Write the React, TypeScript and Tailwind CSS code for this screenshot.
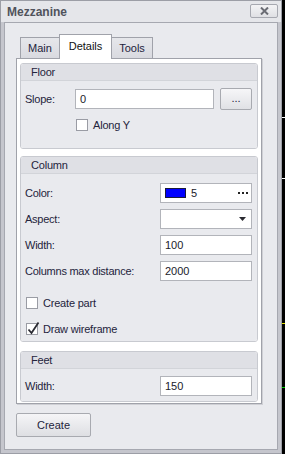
import React from "react";

const font = { fontFamily: '"Liberation Sans", Arial, sans-serif' };

function Checkbox({ checked }: { checked?: boolean }) {
  return (
    <div className="relative w-[12px] h-[12px] border border-[#9a9ca4] bg-white shrink-0">
      {checked && (
        <svg className="absolute left-[0px] top-[-3px]" width="13" height="14" viewBox="0 0 13 14">
          <path d="M1.5 8.5 L4.5 12 L11.5 1.5" fill="none" stroke="#2b2b33" strokeWidth="1.8" />
        </svg>
      )}
    </div>
  );
}

function Group({ title, children, className = "" }: { title: string; children: React.ReactNode; className?: string }) {
  return (
    <div className={"border border-[#c8cad0] rounded-[3px] overflow-hidden " + className}>
      <div className="h-[17px] bg-[#dfe0e5] border-b border-[#d2d4d9] flex items-center pl-[10px] text-[11px] text-[#24243c] tracking-[-0.2px]">
        {title}
      </div>
      <div className="bg-[#e9eaee]">{children}</div>
    </div>
  );
}

function Field({ label, value, children }: { label: string; value?: string; children?: React.ReactNode }) {
  return (
    <div className="flex items-center justify-between h-[20px]">
      <span className="text-[11px] text-[#24243c] tracking-[-0.25px]">{label}</span>
      <div className="w-[92px] h-[20px] bg-white border border-[#b2b4ba] flex items-center pl-[4px] text-[11px] text-[#1a1a2a]">
        {children ?? value}
      </div>
    </div>
  );
}

export default function App() {
  return (
    <div className="w-[285px] h-[454px] bg-black flex" style={font}>
      <div className="w-[282px] h-[454px] border border-[#9c9ea6] bg-[#e5e6ea] flex flex-col">
        {/* Title bar */}
        <div className="h-[21px] flex items-center justify-between pl-[6px] pr-[3px] shrink-0">
          <span className="text-[12px] font-bold text-[#50535c]">Mezzanine</span>
          <div className="w-[28px] h-[14px] mb-[2px] border border-[#a6a8b0] rounded-[2px] bg-gradient-to-b from-[#f3f3f5] to-[#dfe0e4] flex items-center justify-center">
            <svg width="9" height="8" viewBox="0 0 9 8">
              <path d="M1 0.5 L8 7.5 M8 0.5 L1 7.5" stroke="#6a6c74" strokeWidth="2" />
            </svg>
          </div>
        </div>
        {/* Body frame */}
        <div className="flex-1 bg-[#c5c6cd] px-[3px] pb-[3px] flex">
          <div className="flex-1 border border-[#a6a8b0] bg-[#e9eaee] flex flex-col pl-[11px] pt-[11px]">
            {/* Tabs */}
            <div className="flex items-end h-[24px] ml-[4px] text-[11px] text-[#24243c]">
              <div className="w-[40px] h-[21px] border border-b-0 border-[#a0a2aa] bg-gradient-to-b from-[#e6e7eb] to-[#d9dae0] flex items-center justify-center">
                Main
              </div>
              <div className="w-[53px] h-[25px] -ml-px -mb-px border border-b-0 border-[#a0a2aa] bg-white relative z-10 flex items-center justify-center pb-[2px] text-[#111]">
                Details
              </div>
              <div className="w-[42px] h-[21px] -ml-px border border-b-0 border-[#a0a2aa] bg-gradient-to-b from-[#e6e7eb] to-[#d9dae0] flex items-center justify-center">
                Tools
              </div>
            </div>
            {/* Tab panel */}
            <div className="w-[246px] border border-[#a0a2aa] bg-white shadow-[1px_1px_0_#cfd0d5] px-[3px] pt-[4px] pb-[1px] flex flex-col">
              <Group title="Floor">
                <div className="px-[4px] pt-[7px] pb-[17px] flex flex-col">
                  <div className="flex items-center h-[22px]">
                    <span className="w-[50px] text-[11px] text-[#24243c] tracking-[-0.25px]">Slope:</span>
                    <div className="w-[139px] h-[20px] bg-white border border-[#b2b4ba] flex items-center pl-[4px] text-[11px] text-[#1a1a2a]">
                      0
                    </div>
                    <div className="ml-[6px] w-[32px] h-[22px] border border-[#a8aab0] rounded-[2px] bg-gradient-to-b from-[#f6f6f8] to-[#e0e1e5] flex items-center justify-center text-[11px] text-[#24243c] pb-[2px]">
                      ...
                    </div>
                  </div>
                  <div className="flex items-center h-[12px] mt-[9px] pl-[51px] gap-[5px]">
                    <Checkbox />
                    <span className="text-[11px] text-[#24243c] tracking-[-0.2px]">Along Y</span>
                  </div>
                </div>
              </Group>
              <Group title="Column" className="mt-[7px]">
                <div className="pl-[4px] pr-[5px] pt-[9px] pb-[6px] flex flex-col">
                  <div className="flex flex-col gap-[6px]">
                    <Field label="Color:">
                      <div className="flex items-center w-full pr-[3px]">
                        <div className="w-[21px] h-[10px] bg-[#0000ff] border border-[#1a1a3a]" />
                        <span className="ml-[5px]">5</span>
                        <div className="ml-auto flex gap-[2px]">
                          <div className="w-[2px] h-[2px] bg-[#222]" />
                          <div className="w-[2px] h-[2px] bg-[#222]" />
                          <div className="w-[2px] h-[2px] bg-[#222]" />
                        </div>
                      </div>
                    </Field>
                    <Field label="Aspect:">
                      <div className="flex items-center justify-end w-full pr-[5px]">
                        <svg width="7" height="4" viewBox="0 0 7 4">
                          <path d="M0 0 H7 L3.5 4 Z" fill="#2a2a30" />
                        </svg>
                      </div>
                    </Field>
                    <Field label="Width:" value="100" />
                    <Field label="Columns max distance:" value="2000" />
                  </div>
                  <div className="flex items-center h-[12px] mt-[16px] pl-[1px] gap-[5px]">
                    <Checkbox />
                    <span className="text-[11px] text-[#24243c] tracking-[-0.2px]">Create part</span>
                  </div>
                  <div className="flex items-center h-[12px] mt-[14px] pl-[1px] gap-[5px]">
                    <Checkbox checked />
                    <span className="text-[11px] text-[#24243c] tracking-[-0.2px]">Draw wireframe</span>
                  </div>
                </div>
              </Group>
              <Group title="Feet" className="mt-[9px]">
                <div className="pl-[4px] pr-[5px] pt-[7px] pb-[5px]">
                  <Field label="Width:" value="150" />
                </div>
              </Group>
            </div>
            {/* Create button */}
            <div className="mt-[9px] w-[75px] h-[24px] border border-[#a8aab0] rounded-[2px] bg-gradient-to-b from-[#f5f5f7] to-[#dedfe3] flex items-center justify-center text-[11px] text-[#24243c]">
              Create
            </div>
          </div>
        </div>
      </div>
      {/* Right strip */}
      <div className="relative w-[3px] h-[454px]">
        <div className="absolute left-0 top-[117px] w-[3px] h-px bg-white" />
        <div className="absolute left-0 top-[178px] w-[3px] h-px bg-white" />
        <div className="absolute left-0 top-[323px] w-[3px] h-px bg-[#e0e000]" />
        <div className="absolute left-0 top-[387px] w-[3px] h-px bg-[#00d000]" />
      </div>
    </div>
  );
}
